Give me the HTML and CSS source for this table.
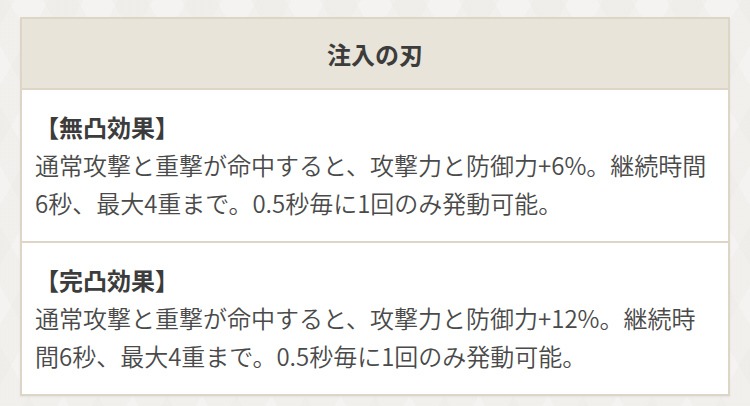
FILE: index.html
```html
<!DOCTYPE html>
<html lang="ja">
<head>
<meta charset="utf-8">
<link rel="stylesheet" href="styles.css">
</head>
<body>
<div class="page">
  <div class="table">
    <div class="table-head">注入の刃</div>
    <div class="table-row">
      <div class="row-title">【無凸効果】</div>
      <div class="row-text">通常攻撃と重撃が命中すると、攻撃力と防御力+6%。継続時間6秒、最大4重まで。0.5秒毎に1回のみ発動可能。</div>
    </div>
    <div class="table-row">
      <div class="row-title">【完凸効果】</div>
      <div class="row-text">通常攻撃と重撃が命中すると、攻撃力と防御力+12%。継続時間6秒、最大4重まで。0.5秒毎に1回のみ発動可能。</div>
    </div>
  </div>
</div>
</body>
</html>
```

FILE: styles.css
```css
html, body {
  margin: 0;
  padding: 0;
}
body {
  width: 750px;
  height: 406px;
  overflow: hidden;
  background-color: #f4f3f1;
  background-image:
    repeating-linear-gradient(60deg, rgba(234,232,228,0.3) 0 30px, rgba(244,243,241,0) 30px 60px),
    repeating-linear-gradient(-60deg, rgba(234,232,228,0.3) 0 30px, rgba(244,243,241,0) 30px 60px);
  font-family: "Noto Sans CJK JP", "Noto Sans", sans-serif;
  color: #444;
}
.page {
  padding: 17px 20px 0 20px;
}
.table {
  border: 2px solid #ddd6c7;
  background: #fff;
  box-shadow: 0 1px 2px rgba(0,0,0,0.06);
}
.table-head {
  background: #e8e4d9;
  border-bottom: 2px solid #ddd6c7;
  text-align: center;
  font-weight: 700;
  font-size: 24px;
  line-height: 37px;
  padding: 16px 0;
  color: #3c3c3c;
}
.table-row {
  padding: 18px 13px 19px 13px;
  font-size: 24px;
  line-height: 38px;
}
.table-row + .table-row {
  border-top: 2px solid #ddd6c7;
}
.row-title {
  font-weight: 700;
  color: #3c3c3c;
}
.row-text {
  font-weight: 350;
  color: #4a4a4a;
}
```
